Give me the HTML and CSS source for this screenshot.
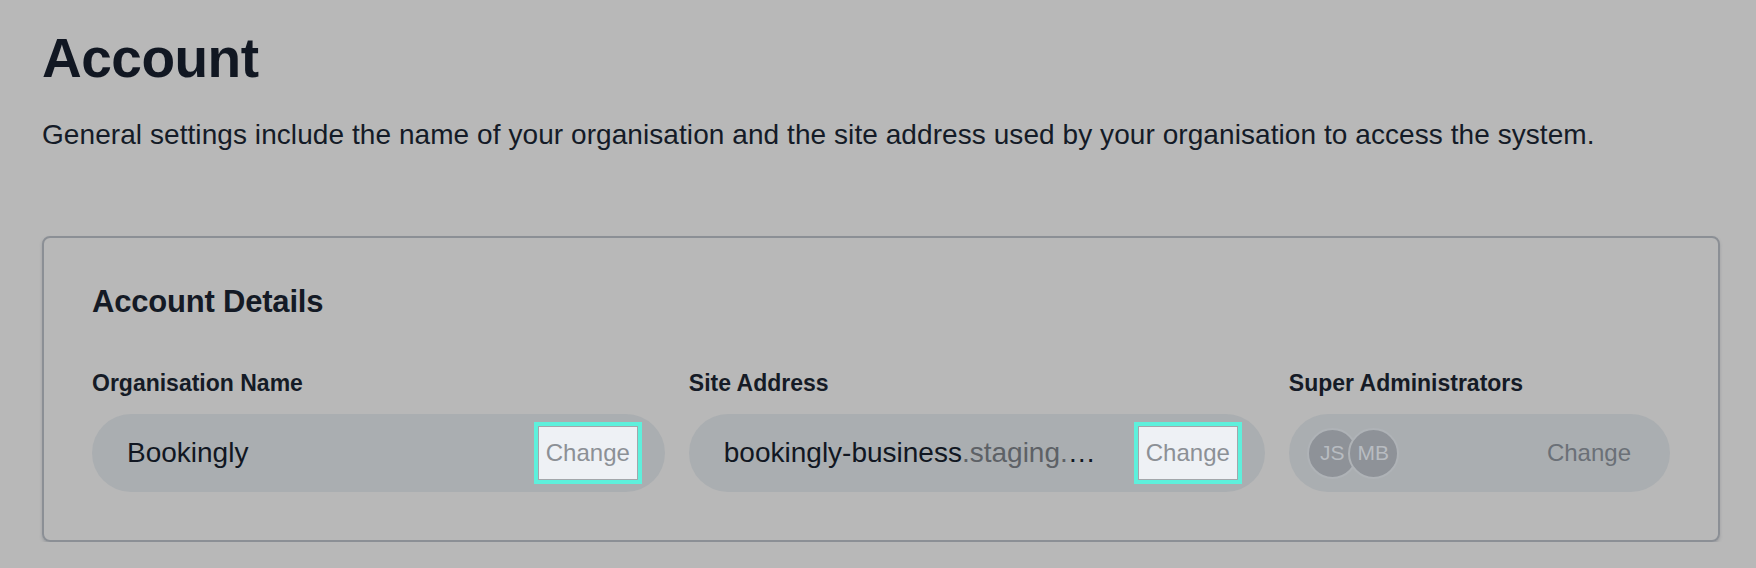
FILE: index.html
```html
<!DOCTYPE html>
<html lang="en">
<head>
<meta charset="utf-8">
<title>Account</title>
<link rel="stylesheet" href="styles.css">
</head>
<body>
<main class="page">
  <h1 class="title">Account</h1>
  <p class="intro">General settings include the name of your organisation and the site address used by your organisation to access the system.</p>

  <section class="card">
    <h2 class="card-title">Account Details</h2>
    <div class="fields">
      <div class="field field-org">
        <div class="label">Organisation Name</div>
        <div class="pill">
          <span class="value">Bookingly</span>
          <button class="change change-focus">Change</button>
        </div>
      </div>
      <div class="field field-site">
        <div class="label">Site Address</div>
        <div class="pill">
          <span class="value"><span class="strong">bookingly-business</span><span class="muted">.staging.bookingly.com</span></span>
          <button class="change change-focus">Change</button>
        </div>
      </div>
      <div class="field field-admin">
        <div class="label">Super Administrators</div>
        <div class="pill pill-admin">
          <div class="avatars">
            <span class="avatar">JS</span>
            <span class="avatar">MB</span>
          </div>
          <button class="change change-plain">Change</button>
        </div>
      </div>
    </div>
  </section>
</main>
</body>
</html>
```

FILE: styles.css
```css
* { box-sizing: border-box; }

html, body {
  margin: 0;
  padding: 0;
  background: #b8b8b8;
  font-family: "Liberation Sans", Arial, Helvetica, sans-serif;
  color: #111722;
}

.page {
  padding: 26px 36px 0 42px;
}

.title {
  margin: 0;
  font-size: 55px;
  line-height: 64px;
  font-weight: 700;
  letter-spacing: -0.5px;
  color: #111722;
}

.intro {
  margin: 28px 0 0 0;
  font-size: 28px;
  line-height: 34px;
  letter-spacing: 0.07px;
  color: #141b27;
}

.card {
  margin-top: 84px;
  width: 1678px;
  height: 306px;
  border: 2px solid #8b8f95;
  border-radius: 8px;
  padding: 46px 48px 0 48px;
  box-shadow: 0 2px 3px rgba(120, 124, 130, 0.45);
}

.card-title {
  margin: 0;
  font-size: 31px;
  line-height: 36px;
  font-weight: 700;
  color: #141a25;
  letter-spacing: -0.2px;
}

.fields {
  display: flex;
  gap: 24px;
  margin-top: 49px;
}

.field-org { width: 574px; }
.field-site { width: 576px; }
.field-admin { width: 382px; }

.label {
  font-size: 23px;
  line-height: 28px;
  font-weight: 700;
  color: #151b26;
  margin-bottom: 17px;
}

.pill {
  height: 78px;
  border-radius: 39px;
  background: #aaaeb1;
  display: flex;
  align-items: center;
  padding: 0 27px 0 35px;
  gap: 34px;
}

.value {
  flex: 1;
  min-width: 0;
  font-size: 28px;
  white-space: nowrap;
  overflow: hidden;
  text-overflow: ellipsis;
  color: #111722;
}

.strong { color: #111722; }
.muted { color: #5d6166; }

.change {
  font-family: "Liberation Sans", Arial, Helvetica, sans-serif;
  font-size: 24px;
  cursor: pointer;
}

.change-focus {
  width: 100px;
  height: 54px;
  background: #eef1f5;
  color: #8c9096;
  border: 1px solid #a3a7ab;
  outline: 4px solid #5ef0dc;
  outline-offset: 0;
  padding: 0;
  flex: none;
}

.pill-admin {
  padding: 0 39px 0 18px;
  justify-content: space-between;
}

.avatars {
  display: flex;
}

.avatar {
  width: 51px;
  height: 51px;
  border-radius: 50%;
  background: #8e9298;
  border: 2px solid #afb3b7;
  color: #b8bcc1;
  font-size: 21px;
  display: flex;
  align-items: center;
  justify-content: center;
}

.avatar + .avatar { margin-left: -10px; }

.change-plain {
  background: none;
  border: none;
  padding: 0;
  color: #6b7077;
}
```
